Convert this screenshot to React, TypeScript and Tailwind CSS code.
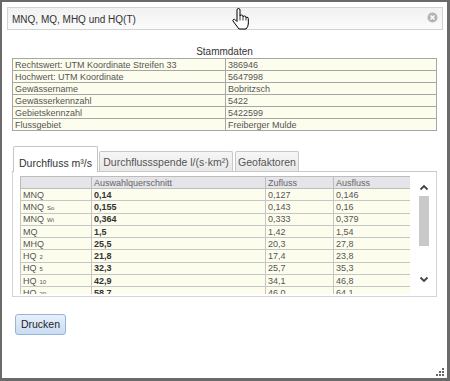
import React from 'react';

const stammdaten: [string, string][] = [
  ['Rechtswert: UTM Koordinate Streifen 33', '386946'],
  ['Hochwert: UTM Koordinate', '5647998'],
  ['Gewässername', 'Bobritzsch'],
  ['Gewässerkennzahl', '5422'],
  ['Gebietskennzahl', '5422599'],
  ['Flussgebiet', 'Freiberger Mulde'],
];

type Row = { name: string; sub?: string; wert: string; zu: string; aus: string };

const rows: Row[] = [
  { name: 'MNQ', wert: '0,14', zu: '0,127', aus: '0,146' },
  { name: 'MNQ', sub: 'So', wert: '0,155', zu: '0,143', aus: '0,16' },
  { name: 'MNQ', sub: 'Wi', wert: '0,364', zu: '0,333', aus: '0,379' },
  { name: 'MQ', wert: '1,5', zu: '1,42', aus: '1,54' },
  { name: 'MHQ', wert: '25,5', zu: '20,3', aus: '27,8' },
  { name: 'HQ', sub: '2', wert: '21,8', zu: '17,4', aus: '23,8' },
  { name: 'HQ', sub: '5', wert: '32,3', zu: '25,7', aus: '35,3' },
  { name: 'HQ', sub: '10', wert: '42,9', zu: '34,1', aus: '46,8' },
  { name: 'HQ', sub: '20', wert: '58,7', zu: '46,0', aus: '64,1' },
  { name: 'HQ', sub: '50', wert: '77,2', zu: '60,4', aus: '84,3' },
];

// windows style hand cursor
const HandCursor = () => (
  <svg width="17" height="22" viewBox="0 0 17 22">
    <path
      d="M5 2Q5 .5 6.5 .5Q8 .5 8 2V8Q8 7 9.5 7Q11 7 11 8.5V9Q11 8 12.5 8Q14 8 14 9.5V10Q14.2 9.2 15 9.2Q16.3 9.2 16.3 10.6V16Q16 19 14 21H7Q5.5 19 4 17L1 13Q.4 12 1.5 11.4Q2.5 11 3.5 12L5 13.5Z"
      fill="#fff"
      stroke="#000"
      strokeWidth="1"
      strokeLinejoin="round"
    />
    <path d="M8 8V12.5M11 9V12.5M14 10V12.5" stroke="#000" strokeWidth="0.8" />
  </svg>
);

export default function App() {
  return (
    <div className="relative flex h-[381px] w-[450px] flex-col border-t-2 border-l-2 border-r-[3px] border-b-[3px] border-[#6a6a6a] bg-white font-['Liberation_Sans',Arial,sans-serif]">
      {/* Title bar */}
      <div className="mt-[5px] ml-[5px] mr-[4px] flex h-[23px] items-center justify-between border border-[#d2d2d2] bg-gradient-to-b from-[#f1f1f1] to-[#fbfbfb] pl-[4px] pr-[4px]">
        <span className="mt-[3px] text-[10px] leading-[12px] text-[#333]">MNQ, MQ, MHQ und HQ(T)</span>
        <svg width="11" height="11" viewBox="0 0 11 11" className="mb-[2px]">
          <circle cx="5.5" cy="5.5" r="5" fill="#b4b4b4" />
          <path d="M3.5 3.5L7.5 7.5M7.5 3.5L3.5 7.5" stroke="#fff" strokeWidth="1.4" />
        </svg>
      </div>

      <div className="absolute left-[230px] top-[6px]">
        <HandCursor />
      </div>

      <div className="flex flex-col px-[10px]">
        {/* Stammdaten */}
        <div className="mt-[16px] h-[12px] text-center text-[10px] leading-[12px] text-[#333]">Stammdaten</div>
        <table className="w-full border-collapse text-[9px] text-[#555]">
          <tbody>
            {stammdaten.map(([label, value]) => (
              <tr key={label} className="h-[12px]">
                <td className="w-[213px] border border-[#a6a6a6] bg-[#fdfdee] p-0 pl-[2px] leading-[10px]">{label}</td>
                <td className="border border-[#a6a6a6] bg-[#fdfdee] p-0 pl-[2px] leading-[10px]">{value}</td>
              </tr>
            ))}
          </tbody>
        </table>

        {/* Tabs */}
        <div className="mt-[15px] flex items-end border-b border-[#c8c8c8] pl-[1px] text-[10.5px] leading-[12px]">
          <div className="-mb-[1px] h-[26px] w-[85px] rounded-t-[2px] border border-b-0 border-[#c4c4c4] bg-white pt-[10px] text-center text-[#333]">
            Durchfluss m³/s
          </div>
          <div className="ml-[1px] h-[20px] w-[134px] rounded-t-[2px] border border-b-0 border-[#c8c8c8] bg-gradient-to-b from-[#f6f6f6] to-[#e8e8e8] pt-[4px] text-center text-[#555]">
            Durchflussspende l/(s·km²)
          </div>
          <div className="ml-[2px] h-[20px] w-[64px] rounded-t-[2px] border border-b-0 border-[#c8c8c8] bg-gradient-to-b from-[#f6f6f6] to-[#e8e8e8] pt-[4px] text-center text-[#555]">
            Geofaktoren
          </div>
        </div>

        {/* Tab panel */}
        <div className="flex border-x border-b border-[#d4d4d4] pt-[4px] pb-[2px] pl-[7px]">
          <div className="h-[118px] w-[390px] overflow-hidden">
            <table className="w-[390px] table-fixed border-collapse text-[9px] text-[#555]">
              <colgroup>
                <col className="w-[71px]" />
                <col className="w-[174px]" />
                <col className="w-[68px]" />
                <col className="w-[77px]" />
              </colgroup>
              <thead>
                <tr className="h-[12px]">
                  <th className="border border-[#bdbdbd] bg-[#e4e4e9] p-0" />
                  <th className="border border-[#bdbdbd] border-l-[#8a8a8a] bg-[#e4e4e9] p-0 pl-[2px] text-left font-normal leading-[10px] text-[#666]">
                    Auswahlquerschnitt
                  </th>
                  <th className="border border-[#bdbdbd] bg-[#e4e4e9] p-0 pl-[2px] text-left font-normal leading-[10px] text-[#666]">
                    Zufluss
                  </th>
                  <th className="border border-[#bdbdbd] bg-[#e4e4e9] p-0 pl-[2px] text-left font-normal leading-[10px] text-[#666]">
                    Ausfluss
                  </th>
                </tr>
              </thead>
              <tbody>
                {rows.map((r, i) => (
                  <tr key={i} className="h-[12.3px]">
                    <td className="whitespace-nowrap border border-[#c6c6c6] bg-[#fdfdee] p-0 pl-[2px] leading-[10px]">
                      {r.name}
                      {r.sub && <span className="ml-[3px] inline-block translate-y-[6px] align-top text-[6px] leading-[0]">{r.sub}</span>}
                    </td>
                    <td className="border border-[#c6c6c6] border-l-[#8a8a8a] bg-[#fdfdee] p-0 pl-[2px] font-bold leading-[10px] text-[#333]">
                      {r.wert}
                    </td>
                    <td className="border border-[#c6c6c6] bg-[#fdfdee] p-0 pl-[2px] leading-[10px]">{r.zu}</td>
                    <td className="border border-[#c6c6c6] bg-[#fdfdee] p-0 pl-[2px] leading-[10px]">{r.aus}</td>
                  </tr>
                ))}
              </tbody>
            </table>
          </div>

          {/* Scrollbar */}
          <div className="flex h-[118px] w-[22px] flex-col items-center">
            <svg width="10" height="7" viewBox="0 0 10 7" className="mt-[8px] ml-[5px]">
              <path d="M1.5 5.5L5 2L8.5 5.5" fill="none" stroke="#444" strokeWidth="1.8" />
            </svg>
            <div className="mt-[5px] ml-[5px] h-[50px] w-[10px] bg-[#c9c9c9]" />
            <div className="flex-1" />
            <svg width="10" height="7" viewBox="0 0 10 7" className="mb-[11px] ml-[5px]">
              <path d="M1.5 1.5L5 5L8.5 1.5" fill="none" stroke="#444" strokeWidth="1.8" />
            </svg>
          </div>
        </div>

        {/* Button */}
        <div className="mt-[14px] ml-[3px]">
          <button className="h-[21px] w-[51px] rounded-[3px] border border-[#96b4d6] bg-gradient-to-b from-[#e6f0fb] to-[#cadcf3] text-[10.5px] text-[#1e1e1e]">
            Drucken
          </button>
        </div>
      </div>

      {/* Resize grip */}
      <div className="absolute bottom-[2px] right-[3px] grid grid-cols-3 gap-[1px]">
        <span className="h-[2px] w-[2px]" />
        <span className="h-[2px] w-[2px]" />
        <span className="h-[2px] w-[2px] bg-[#666]" />
        <span className="h-[2px] w-[2px]" />
        <span className="h-[2px] w-[2px] bg-[#666]" />
        <span className="h-[2px] w-[2px] bg-[#666]" />
        <span className="h-[2px] w-[2px] bg-[#666]" />
        <span className="h-[2px] w-[2px] bg-[#666]" />
        <span className="h-[2px] w-[2px] bg-[#666]" />
      </div>
    </div>
  );
}
